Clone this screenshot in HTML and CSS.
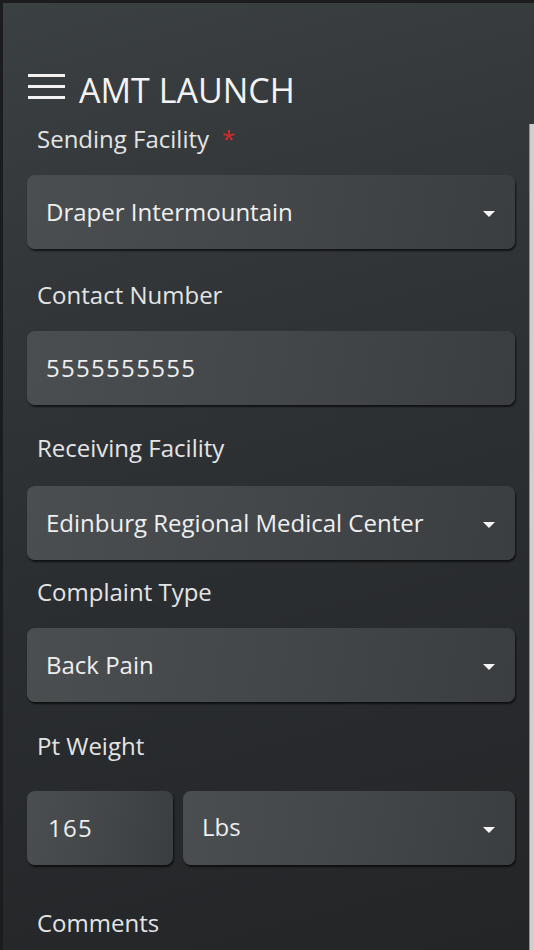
FILE: index.html
```html
<!DOCTYPE html>
<html lang="en">
<head>
<meta charset="utf-8">
<title>AMT Launch</title>
<link rel="stylesheet" href="styles.css">
</head>
<body>
<div class="screen">
  <header class="header">
    <svg class="menu-icon" width="37" height="25" viewBox="0 0 37 25" aria-hidden="true">
      <rect x="0" y="0" width="37" height="3" fill="#f2f2f2"/>
      <rect x="0" y="11" width="37" height="3" fill="#f2f2f2"/>
      <rect x="0" y="22" width="37" height="3" fill="#f2f2f2"/>
    </svg>
    <h1 class="title">AMT LAUNCH</h1>
  </header>

  <div class="field field--first">
    <div class="label">Sending Facility<span class="required">*</span></div>
    <div class="control control--select">
      <span class="value">Draper Intermountain</span>
      <span class="caret"></span>
    </div>
  </div>

  <div class="field field--gap-30">
    <div class="label">Contact Number</div>
    <div class="control">
      <span class="value value--digits">5555555555</span>
    </div>
  </div>

  <div class="field field--gap-27">
    <div class="label label--gap-22">Receiving Facility</div>
    <div class="control control--select">
      <span class="value">Edinburg Regional Medical Center</span>
      <span class="caret"></span>
    </div>
  </div>

  <div class="field field--gap-16">
    <div class="label">Complaint Type</div>
    <div class="control control--select">
      <span class="value">Back Pain</span>
      <span class="caret"></span>
    </div>
  </div>

  <div class="field field--gap-28">
    <div class="label label--gap-29">Pt Weight</div>
    <div class="row">
      <div class="control control--small">
        <span class="value value--digits">165</span>
      </div>
      <div class="control control--select control--grow">
        <span class="value value--lift">Lbs</span>
        <span class="caret"></span>
      </div>
    </div>
  </div>

  <div class="field field--gap-42">
    <div class="label">Comments</div>
  </div>

  <div class="scrollbar"></div>
</div>
</body>
</html>
```

FILE: styles.css
```css
html, body {
  margin: 0;
  padding: 0;
  height: 100%;
}

body {
  background: #1b1c1d;
  font-family: "Open Sans", "Noto Sans", "DejaVu Sans", sans-serif;
  overflow: hidden;
}

.screen {
  position: relative;
  margin: 3px 0 0 3px;
  height: 947px;
  box-sizing: border-box;
  padding: 67px 19px 0 24px;
  background: linear-gradient(165deg, #3b4043 0%, #33373a 25%, #2b2e31 55%, #232527 100%);
  overflow: hidden;
}

.header {
  display: flex;
  align-items: flex-start;
  height: 40px;
}

.menu-icon {
  display: block;
  margin: 4px 14px 0 1px;
}

.title {
  margin: 0;
  font-size: 34px;
  line-height: 40px;
  font-weight: 500;
  color: #f3f3f3;
  letter-spacing: 0;
}

.field {
  display: flex;
  flex-direction: column;
}

.field--first { margin-top: 13px; }
.field--gap-30 { margin-top: 30px; }
.field--gap-27 { margin-top: 27px; }
.field--gap-16 { margin-top: 16px; }
.field--gap-28 { margin-top: 28px; }
.field--gap-42 { margin-top: 42px; }

.label {
  font-size: 24px;
  line-height: 32px;
  color: #e4e4e4;
  padding-left: 10px;
  margin-bottom: 20px;
}

.label--gap-22 { margin-bottom: 22px; }
.label--gap-29 { margin-bottom: 29px; }

.required {
  color: #d42a2a;
  margin-left: 13px;
}

.control {
  display: flex;
  align-items: center;
  height: 74px;
  box-sizing: border-box;
  padding: 0 20px 0 19px;
  border-radius: 8px;
  background: linear-gradient(100deg, #4a4e51 0%, #43474a 50%, #3b3e41 100%);
  box-shadow: 1px 2px 2px rgba(0, 0, 0, 0.65);
}

.control--select {
  justify-content: space-between;
}

.row {
  display: flex;
  gap: 10px;
}

.control--small {
  width: 146px;
  padding-left: 21px;
}

.control--grow {
  flex: 1;
}

.value {
  font-size: 24px;
  line-height: 32px;
  color: #efefef;
  white-space: nowrap;
}

.value--digits {
  letter-spacing: 1.3px;
}

.value--lift {
  position: relative;
  top: -1px;
}

.caret {
  width: 0;
  height: 0;
  margin-top: 3px;
  border-left: 6px solid transparent;
  border-right: 6px solid transparent;
  border-top: 6px solid #f5f5f5;
}

.scrollbar {
  position: absolute;
  right: 0;
  top: 121px;
  bottom: 0;
  width: 5px;
  box-sizing: border-box;
  background: #cfcfcf;
  border-left: 1px solid #8e8e8e;
}
```
